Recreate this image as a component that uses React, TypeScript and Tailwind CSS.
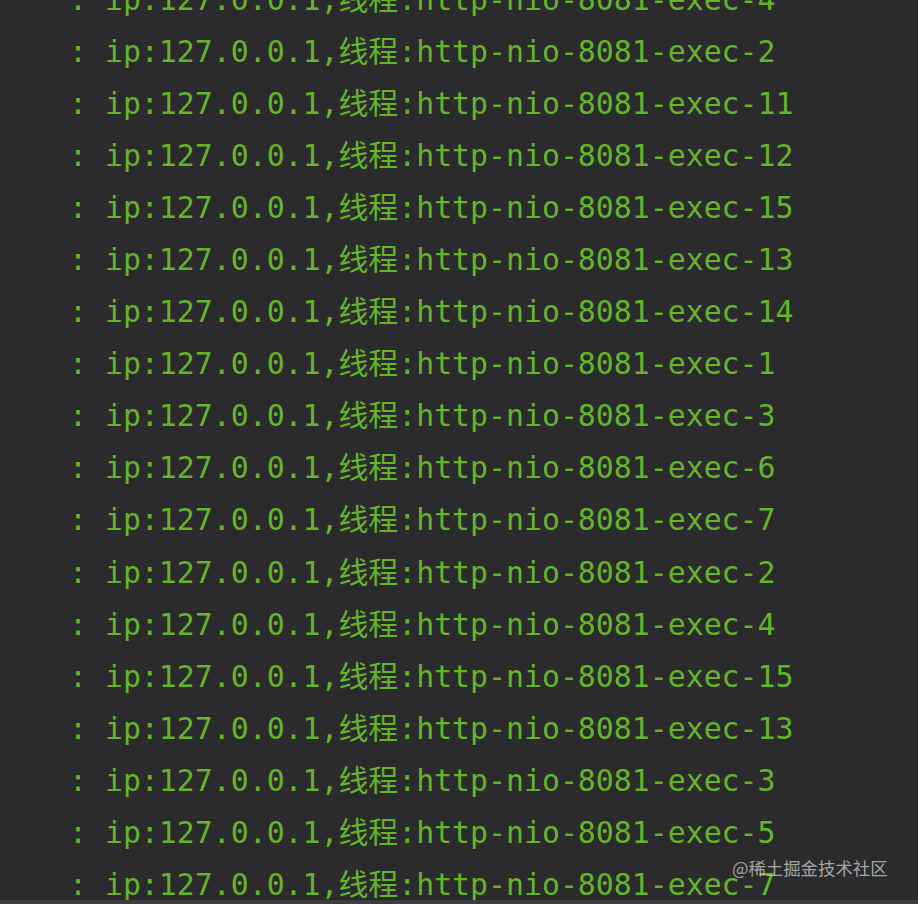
const threads = [4, 2, 11, 12, 15, 13, 14, 1, 3, 6, 7, 2, 4, 15, 13, 3, 5, 7]

export default function App() {
  return (
    <div className="relative w-[918px] h-[904px] overflow-hidden bg-[#2b2b2d]">
      <div className="flex flex-col mt-[-26px] pl-[69px] font-['DejaVu_Sans_Mono','Noto_Sans_CJK_SC',monospace] text-[29.85px] leading-[52.05px] text-[#65b52a] whitespace-pre">
        {threads.map((n, i) => (
          <div key={i}>{`: ip:127.0.0.1,线程:http-nio-8081-exec-${n}`}</div>
        ))}
      </div>
      <div className="absolute left-0 right-0 bottom-0 h-[4px] bg-[#3d3d3f]" />
      <div className="absolute left-[732px] top-[856px] font-['Noto_Sans_CJK_SC',sans-serif] text-[17.4px] leading-[24px] text-[#c8c8c8]/80">
        @稀土掘金技术社区
      </div>
    </div>
  )
}
